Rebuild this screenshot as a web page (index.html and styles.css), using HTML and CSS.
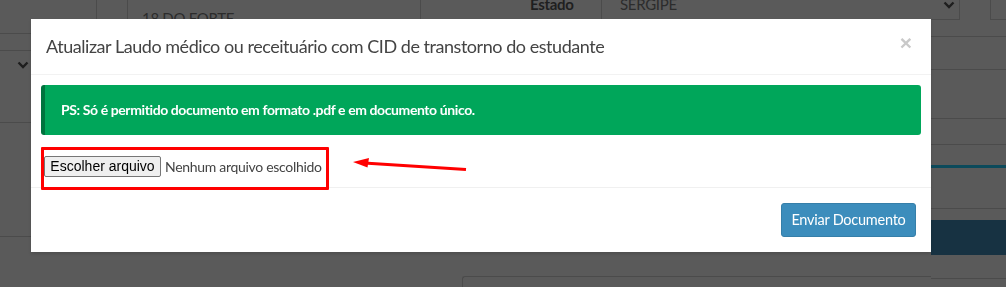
FILE: index.html
```html
<!DOCTYPE html>
<html lang="pt-BR">
<head>
<meta charset="utf-8">
<title>Atualizar Laudo</title>
<link rel="stylesheet" href="styles.css">
</head>
<body>
<div class="page">
  <div class="row-top">
    <div class="t-box1"></div>
    <div class="t-input">18 DO FORTE</div>
    <div class="t-label">Estado</div>
    <div class="t-select"><span>SERGIPE</span>
      <svg class="chev" width="12" height="8" viewBox="0 0 12 8"><polyline points="1.5,1.5 6,6 10.5,1.5" fill="none" stroke="#1e1e1e" stroke-width="2.4"/></svg>
    </div>
    <div class="t-box2"></div>
  </div>
  <div class="row-main">
    <div class="col-left">
      <div class="l1"></div>
      <div class="l2"></div>
      <div class="l3"><svg class="chev" width="12" height="8" viewBox="0 0 12 8"><polyline points="1.5,1.5 6,6 10.5,1.5" fill="none" stroke="#1e1e1e" stroke-width="2.4"/></svg></div>
      <div class="l4"></div>
    </div>
    <div class="col-mid">
      <div class="m-line"></div>
    </div>
    <div class="col-right">
      <div class="r1"></div>
      <div class="r2"></div>
      <div class="r3"></div>
      <div class="r4"></div>
      <div class="r5"></div>
      <div class="r6"></div>
      <div class="r7"></div>
      <div class="r8"></div>
    </div>
  </div>
</div>

<div class="modal-layer">
  <div class="modal-content">
    <div class="modal-header">
      <span class="close">×</span>
      <h4 class="modal-title">Atualizar Laudo médico ou receituário com CID de transtorno do estudante</h4>
    </div>
    <div class="modal-body">
      <div class="alert">PS: Só é permitido documento em formato .pdf e em documento único.</div>
      <div class="file-row">
        <span class="file-btn">Escolher arquivo</span><span class="file-name">Nenhum arquivo escolhido</span>
        <div class="mark-box"></div>
        <svg class="mark-arrow" width="116" height="16" viewBox="0 0 116 16">
          <line x1="12" y1="5" x2="114" y2="11.5" stroke="#f00" stroke-width="3"/>
          <polygon points="1,4 17,0 15.5,9.5" fill="#f00"/>
        </svg>
      </div>
    </div>
    <div class="modal-footer">
      <span class="btn-primary">Enviar Documento</span>
    </div>
  </div>
</div>
</body>
</html>
```

FILE: styles.css
```css
* { box-sizing: border-box; }
html, body { margin: 0; padding: 0; }
body {
  background: #5a5a5a;
  width: 1006px;
  height: 287px;
  overflow: hidden;
  font-family: Lato, "Liberation Sans", sans-serif;
}

/* dimmed page behind the modal */
.page { width: 1006px; }
.row-top { display: flex; height: 20px; }
.t-box1 { width: 97px; border-right: 1px solid #4b4b4b; }
.t-input {
  margin-left: 30px; width: 294px; height: 40px;
  border-left: 1px solid #4b4b4b; border-right: 1px solid #4b4b4b;
  padding: 9px 0 0 14px;
  font-size: 15px; color: #2c2c2c; line-height: 18px;
  letter-spacing: -0.3px;
  white-space: nowrap;
}
.t-label {
  margin-left: 109px; width: 71px;
  font-size: 15px; font-weight: 700; color: #1f1f1f;
  line-height: 16px; margin-top: -4px;
  letter-spacing: -0.3px;
}
.t-select {
  width: 359px; height: 20px;
  border-left: 1px solid #4b4b4b; border-right: 1px solid #4b4b4b; border-bottom: 1px solid #4b4b4b;
  display: flex; justify-content: space-between;
  padding: 0 2px 0 18px;
  font-size: 15px; color: #2c2c2c; line-height: 16px;
  letter-spacing: -0.3px;
}
.t-select span { margin-top: -4px; }
.t-select .chev { margin-top: 1px; margin-right: 2px; }
.t-box2 { margin-left: 30px; flex: 1; height: 20px; border-left: 1px solid #4b4b4b; border-bottom: 1px solid #4b4b4b; }

.row-main { display: flex; height: 267px; }
.col-left { width: 31px; }
.col-left > div { border-bottom: 1px solid #4b4b4b; }
.l1 { height: 14px; }
.l2 { height: 17px; }
.l3 { height: 72px; padding: 10px 0 0 17px; }
.l3 .chev { display: block; }
.l4 { height: 114px; }
.col-mid { width: 900px; }
.m-line { margin-top: 256px; margin-left: 431px; height: 11px; border-top: 1px solid #4b4b4b; border-left: 1px solid #4b4b4b; border-top-left-radius: 3px; }
.col-right { flex: 1; }
.col-right > div { border-bottom: 1px solid #4b4b4b; }
.r1 { height: 17px; }
.r2 { height: 33px; }
.r3 { height: 49px; }
.r4 { height: 26px; }
.r5 { height: 23px; border-bottom: 3px solid #0c4a5b !important; }
.r6 { height: 41px; }
.r7 { height: 11px; border-bottom: none !important; }
.r8 { height: 59px; background: linear-gradient(#173242 0, #173242 35px, #5a5a5a 35px); border-bottom: 1px solid #4b4b4b; }

/* modal */
.modal-layer {
  position: fixed; inset: 0;
}
.modal-content {
  width: 900px;
  margin: 19px 0 0 31px;
  background: #fff;
  box-shadow: 0 2px 3px rgba(0,0,0,.125);
}
.modal-header {
  padding: 15px;
  border-bottom: 1px solid #f2f2f2;
}
.modal-title {
  margin: 0;
  font-size: 18px;
  font-weight: 400;
  line-height: 25px;
  color: #444;
  letter-spacing: -0.46px;
  white-space: nowrap;
}
.close {
  float: right;
  font-family: "Liberation Sans", sans-serif;
  font-size: 21px;
  font-weight: 700;
  line-height: 1;
  color: #c9c9c9;
  margin: -2px 4px 0 0;
}
.modal-body { padding: 10px; }
.alert {
  background: #00a65a;
  border-left: 4px solid #00733e;
  border-radius: 3px;
  padding: 15px 15px 15px 16px;
  color: #fff;
  font-weight: 700;
  font-size: 14px;
  line-height: 20px;
  letter-spacing: -0.4px;
  white-space: nowrap;
}
.file-row {
  position: relative;
  margin-top: 21px;
  height: 21px;
  display: flex;
  align-items: center;
  padding-left: 3px;
}
.file-btn {
  display: inline-block;
  height: 21px;
  width: 117px;
  background: #efefef;
  border: 1px solid #767676;
  border-radius: 2px;
  font-family: "Liberation Sans", sans-serif;
  font-size: 14px;
  line-height: 19px;
  color: #000;
  text-align: center;
  white-space: nowrap;
}
.file-name {
  margin-left: 4px;
  font-size: 14px;
  color: #444;
  letter-spacing: -0.3px;
  white-space: nowrap;
}
.mark-box {
  position: absolute;
  left: 0; top: -9px;
  width: 288px; height: 43px;
  border: 3px solid #f00;
  border-radius: 1px;
}
.mark-arrow {
  position: absolute;
  left: 311px; top: 2px;
}
.modal-footer {
  border-top: 1px solid #f0f0f0;
  padding: 15px;
  display: flex;
  justify-content: flex-end;
}
.btn-primary {
  display: inline-block;
  background: #3c8dbc;
  border: 1px solid #367fa9;
  border-radius: 3px;
  color: #fff;
  font-size: 14.5px;
  line-height: 20px;
  padding: 6px 0;
  height: 34px;
  width: 135px;
  text-align: center;
  letter-spacing: -0.25px;
  white-space: nowrap;
}
```
